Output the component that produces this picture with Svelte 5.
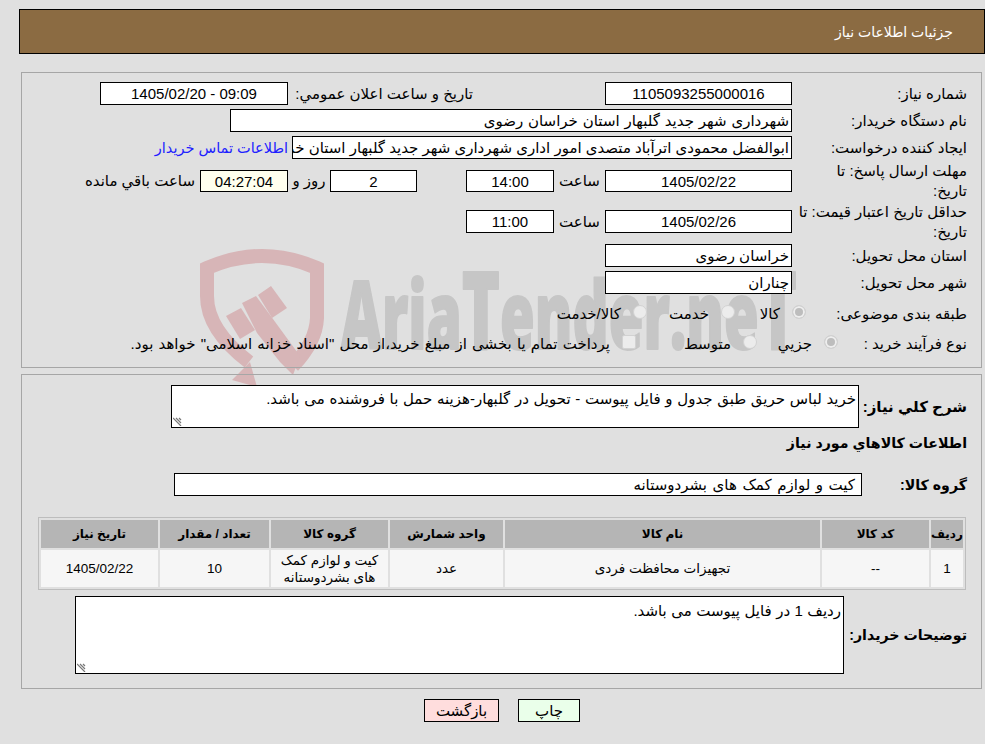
<script>
  let rows = [
    { id: 1, code: '--', name: 'تجهیزات محافظت فردی', unit: 'عدد', group: 'کیت و لوازم کمک های بشردوستانه', qty: '10', date: '1405/02/22' }
  ];
</script>

<div class="page">
  <!-- watermark behind the panels -->
  <svg class="mark" viewBox="0 0 985 744" width="985" height="744" aria-hidden="true">
    <path class="ring" d="M249 362 Q207 330 207 296 L207 268 Q262 244 317 268 L317 318 Q316 342 293 366" />
    <g fill="#d7b5b7">
      <path d="M250 362 L257 387 L232 380 Z" />
      <path d="M226 316 L241 308 L255 330 L240 339 Z" />
      <path d="M242 303 L256 296 L273 319 L300 356 L293 375 L280 362 L257 333 Z" />
      <path d="M258 295 L271 286 L287 308 L272 318 Z" />
    </g>
    <text x="341" y="349" class="marktext" textLength="456" lengthAdjust="spacingAndGlyphs">Aria<tspan class="bigt">T</tspan>ender.ne<tspan class="bigt">T</tspan></text>
  </svg>

  <header class="top">جزئیات اطلاعات نیاز</header>

  <section class="panel first">
    <div class="row">
      <span class="lbl">شماره نیاز:</span>
      <div class="box w187 center">1105093255000016</div>
      <span class="lbl announce">تاریخ و ساعت اعلان عمومي:</span>
      <div class="box w188 center ltr">1405/02/20 - 09:09</div>
    </div>
    <div class="row">
      <span class="lbl">نام دستگاه خریدار:</span>
      <div class="box w562 long">شهرداری شهر جدید گلبهار استان خراسان رضوی</div>
    </div>
    <div class="row">
      <span class="lbl">ایجاد کننده درخواست:</span>
      <div class="box w500 clip">ابوالفضل محمودی اترآباد متصدی امور اداری شهرداری شهر جدید گلبهار استان خراسان رضوی</div>
      <a class="contact" href="#top">اطلاعات تماس خریدار</a>
    </div>
    <div class="row tall">
      <span class="lbl wrap">مهلت ارسال پاسخ: تا<br />تاریخ:</span>
      <div class="box w187 center">1405/02/22</div>
      <span class="hour">ساعت</span>
      <div class="box w88 center">14:00</div>
      <div class="box w87 center days">2</div>
      <span class="rooz">روز و</span>
      <div class="box w88 center pale">04:27:04</div>
      <span class="left">ساعت باقي مانده</span>
    </div>
    <div class="row tall second">
      <span class="lbl wrap">حداقل تاریخ اعتبار قیمت: تا<br />تاریخ:</span>
      <div class="box w187 center">1405/02/26</div>
      <span class="hour">ساعت</span>
      <div class="box w88 center">11:00</div>
    </div>
    <div class="row">
      <span class="lbl">استان محل تحویل:</span>
      <div class="box w187">خراسان رضوی</div>
    </div>
    <div class="row">
      <span class="lbl">شهر محل تحویل:</span>
      <div class="box w187">چناران</div>
    </div>
    <div class="row choice cat">
      <span class="lbl">طبقه بندی موضوعی:</span>
      <span class="opt o1"><i class="radio on"></i>کالا</span>
      <span class="opt o2"><i class="radio"></i>خدمت</span>
      <span class="opt"><i class="radio"></i>کالا/خدمت</span>
    </div>
    <div class="row choice buy">
      <span class="lbl">نوع فرآیند خرید :</span>
      <span class="opt o3"><i class="radio on"></i>جزیي</span>
      <span class="opt o4"><i class="radio"></i>متوسط</span>
      <span class="opt treasury"><i class="check"></i>پرداخت تمام یا بخشی از مبلغ خرید،از محل "اسناد خزانه اسلامی" خواهد بود.</span>
    </div>
  </section>

  <section class="panel">
    <div class="summary">
      <b class="head">شرح کلي نیاز:</b>
      <div class="area a1">
        خرید لباس حریق طبق جدول و فایل پیوست - تحویل در گلبهار-هزینه حمل با فروشنده می باشد.
        <svg class="grip" viewBox="0 0 9 9" width="9" height="9"><path d="M0 1 L8 9 M3 1 L8 6 M6 1 L8 3" /></svg>
      </div>
    </div>
    <b class="head title">اطلاعات کالاهاي مورد نیاز</b>
    <div class="group">
      <b class="head">گروه کالا:</b>
      <div class="box groupbox">کیت و لوازم کمک های بشردوستانه</div>
    </div>

    <table>
      <thead>
        <tr>
          <th class="c1">ردیف</th>
          <th class="c2">کد کالا</th>
          <th class="c3">نام کالا</th>
          <th class="c4">واحد شمارش</th>
          <th class="c5">گروه کالا</th>
          <th class="c6">تعداد / مقدار</th>
          <th class="c5">تاریخ نیاز</th>
        </tr>
      </thead>
      <tbody>
        {#each rows as row (row.id)}
          <tr>
            <td>{row.id}</td>
            <td>{row.code}</td>
            <td>{row.name}</td>
            <td>{row.unit}</td>
            <td>{row.group}</td>
            <td>{row.qty}</td>
            <td>{row.date}</td>
          </tr>
        {/each}
      </tbody>
    </table>

    <div class="notes">
      <b class="head">توضیحات خریدار:</b>
      <div class="area a2">
        ردیف 1 در فایل پیوست می باشد.
        <svg class="grip" viewBox="0 0 9 9" width="9" height="9"><path d="M0 1 L8 9 M3 1 L8 6 M6 1 L8 3" /></svg>
      </div>
    </div>
  </section>

  <div class="actions">
    <button class="print">چاپ</button>
    <button class="back">بازگشت</button>
  </div>
</div>

<style>
  :global(body) {
    background: #e0e0e0;
  }

  .page {
    position: relative;
    height: 744px;
    overflow: hidden;
    direction: rtl;
    font-family: "Liberation Sans", "DejaVu Sans", Tahoma, sans-serif;
    font-size: 15px;
    color: #000;
  }

  .mark {
    position: absolute;
    left: 0;
    top: 0;
    direction: ltr;
  }

  .ring {
    fill: none;
    stroke: #d7b5b7;
    stroke-width: 14;
  }

  .marktext {
    font-family: "Open Sans", sans-serif;
    font-weight: 800;
    font-size: 94px;
    fill: #c6c6c6;
    stroke: #c6c6c6;
    stroke-width: 2;
    stroke-linejoin: round;
    direction: ltr;
  }

  .bigt {
    font-size: 108px;
  }

  .top {
    position: relative;
    box-sizing: border-box;
    height: 45px;
    margin: 9px 0 0 19px;
    padding-right: 31px;
    border: 1px solid #000;
    background: #8b6b42;
    color: #fff;
    font-size: 14px;
    line-height: 44px;
  }

  .panel {
    position: relative;
    margin: 18px 3px 0 21px;
    padding: 9px 14px 0 0;
    height: 285px;
    border: 1px solid #a6a6a6;
  }

  .panel + .panel {
    margin-top: 6px;
    height: 303px;
    padding-top: 10px;
  }

  .long {
    word-spacing: 0.7px;
  }

  .row {
    display: flex;
    align-items: center;
    height: 23px;
    margin-bottom: 4px;
  }

  .row.tall {
    margin-top: 11px;
    height: 22px;
  }

  .row.second {
    margin-top: 18px;
    height: 23px;
  }

  .row.tall + .row:not(.tall) {
    margin-top: 11px;
  }

  .lbl {
    flex: none;
    width: 175px;
    white-space: nowrap;
  }

  .lbl.wrap {
    line-height: 20px;
  }

  .box {
    flex: none;
    box-sizing: border-box;
    height: 100%;
    border: 1px solid #000;
    background: #fff;
    padding: 0 2px;
    line-height: 21px;
    white-space: nowrap;
  }

  .center { text-align: center; }
  .ltr { direction: ltr; }
  .clip { overflow: hidden; }
  .w187 { width: 187px; }
  .w188 { width: 188px; }
  .w562 { width: 562px; }
  .w500 { width: 500px; }
  .w88 { width: 88px; }
  .w87 { width: 87px; }
  .pale { background: #ffffee; }

  .announce {
    margin-right: 132px;
    width: 185px;
  }

  .contact {
    color: #2020ff;
    text-decoration: none;
    margin-right: 4px;
    font-size: 14.5px;
    white-space: nowrap;
  }

  .hour {
    width: 51px;
    text-align: center;
  }

  .days { margin-right: 49px; }

  .rooz {
    width: 42px;
    text-align: center;
  }

  .left {
    margin-right: 5px;
    white-space: nowrap;
  }

  .choice {
    margin-bottom: 7px;
  }

  .cat { margin-top: 8px; }
  .cat .lbl { width: 161px; }
  .buy .lbl { width: 129px; }

  .opt {
    flex: none;
    display: inline-flex;
    align-items: center;
    white-space: nowrap;
  }

  .o1 { width: 71px; }
  .o2 { width: 88px; }
  .o3 { width: 81px; }
  .o4 { width: 121px; }
  .treasury { word-spacing: 1px; }

  .radio {
    box-sizing: border-box;
    width: 14px;
    height: 14px;
    margin: 0 0 4px 12px;
    border: 1px solid #d2d2d2;
    border-radius: 50%;
    background: #ececec;
    flex: none;
  }

  .radio.on {
    background: #bdbdbd;
    box-shadow: inset 0 0 0 2px #eeeeee;
  }

  .check {
    box-sizing: border-box;
    width: 14px;
    height: 14px;
    margin: 0 0 4px 12px;
    border: 1px solid #d2d2d2;
    border-radius: 2px;
    background: #ececec;
    flex: none;
  }

  .head {
    font-size: 14.2px;
    white-space: nowrap;
  }

  .summary {
    display: flex;
    align-items: center;
  }

  .summary .head {
    width: 108px;
    flex: none;
    font-size: 15px;
  }

  .area {
    position: relative;
    box-sizing: border-box;
    border: 1px solid #000;
    background: #fff;
    padding: 3px 2px;
    line-height: 19px;
  }

  .a1 {
    width: 688px;
    height: 43px;
    word-spacing: 0.5px;
  }

  .a2 {
    width: 769px;
    height: 78px;
    padding-top: 4px;
    word-spacing: 0.3px;
  }

  .grip {
    position: absolute;
    left: 1px;
    bottom: 1px;
  }

  .grip path {
    fill: none;
    stroke: #777;
    stroke-width: 1.2;
  }

  .title {
    display: block;
    margin-top: 4px;
    height: 22px;
    line-height: 22px;
  }

  .group {
    display: flex;
    align-items: center;
    height: 23px;
    margin-top: 19px;
  }

  .group .head {
    width: 105px;
    flex: none;
  }

  .groupbox {
    width: 688px;
    padding-right: 6px;
    word-spacing: 1.4px;
  }

  table {
    table-layout: fixed;
    width: 928px;
    height: 73px;
    margin: 21px 1px 0 0;
    border-collapse: separate;
    border-spacing: 2px;
    border: 1px solid #bdbdbd;
  }

  th {
    height: 28px;
    padding: 0;
    background: #b5b5b5;
    font-size: 12px;
    font-weight: 700;
  }

  td {
    padding: 0 6px;
    height: 37px;
    background: #f6f6f6;
    text-align: center;
    line-height: 17px;
    font-size: 13.5px;
  }

  .c1 { width: 32px; }
  .c2 { width: 107px; }
  .c3 { width: 315px; }
  .c4 { width: 113px; }
  .c5 { width: 117px; }
  .c6 { width: 109px; }

  .notes {
    display: flex;
    align-items: center;
    margin-top: 6px;
  }

  .notes .head {
    width: 123px;
    flex: none;
  }

  .actions {
    position: relative;
    display: flex;
    justify-content: center;
    gap: 19px;
    margin: 10px 0 0 19px;
  }

  button {
    box-sizing: border-box;
    height: 23px;
    border: 1px solid #000;
    font: inherit;
    color: #000;
    padding: 0;
  }

  .print {
    width: 62px;
    background: #eaffea;
  }

  .back {
    width: 75px;
    background: #ffdddd;
  }
</style>
